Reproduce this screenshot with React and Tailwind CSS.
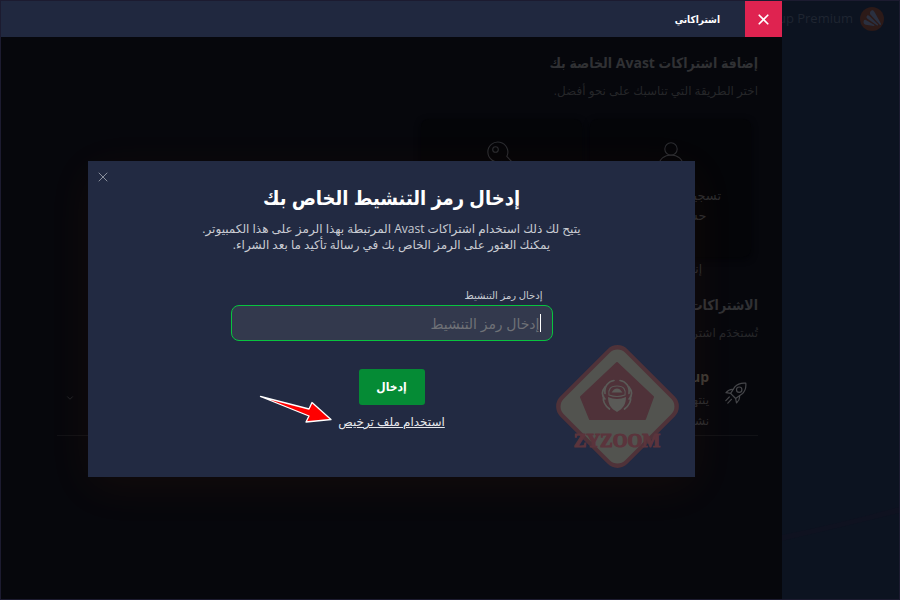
import React from "react";
import { X, ChevronDown } from "lucide-react";

function AvastLogo() {
  return (
    <svg viewBox="0 0 24 24" className="h-6 w-6 shrink-0" aria-hidden="true">
      <circle cx="12" cy="12" r="12" fill="#2c1a18" />
      <g fill="#2a3040">
        <path d="M11.5 3.5c1.3-.7 2.2 0 2.9 1.3l6.6 12c.4.9-.4 1.5-1.2.9L11 8.2c-1.700-1.200-1.400-3.500.5-4.700z" />
        <path d="M7.200 8.600c.6-.6 1.400-.5 2 .1l8.600 8.500c.6.7.2 1.500-.7 1.200L7.800 12.100c-1.500-.7-1.800-2.300-.6-3.500z" />
        <path d="M3.700 13.800c.3-.9 1.200-1.200 2.100-.8l8.300 4.800c.8.600.5 1.300-.4 1.200l-8-1.200c-1.700-.3-2.600-2-2-4z" />
      </g>
    </svg>
  );
}

function KeyIcon() {
  return (
    <svg viewBox="0 0 36 36" className="h-9 w-9" fill="none" stroke="#2b2d31" strokeWidth="1.1" aria-hidden="true">
      <path d="M17 20.500A10 10 0 1 1 22.800 15.500L34 27v6h-6v-4h-4v-4h-3z" />
      <circle cx="11.500" cy="8.500" r="2.800" />
    </svg>
  );
}

function PersonIcon() {
  return (
    <svg viewBox="0 0 36 36" className="h-9 w-9" fill="none" stroke="#2b2d31" strokeWidth="1.1" aria-hidden="true">
      <circle cx="18" cy="12" r="6.200" />
      <path d="M6 30v-2a12 10 0 0 1 24 0v2z" />
    </svg>
  );
}

function RocketIcon() {
  return (
    <svg viewBox="0 0 22 22" className="mt-[21px] h-[22px] w-[22px] shrink-0" fill="none" stroke="#45464a" strokeWidth="1.200" strokeLinejoin="round" strokeLinecap="round" aria-hidden="true">
      <path d="M20.800 1.200c-4.200-.4-8.200.6-11 3.700L5.600 11.300l5 5.200 6.300-4.400c3.200-2.700 4.300-6.700 3.900-10.900z" />
      <circle cx="14.200" cy="7.700" r="2.700" />
      <path d="M8.200 7.500C5.300 7 3.300 8 1 10.700l4.700.6M10.600 16.400l.9 4.600c2.600-2.300 3.500-4.400 3-7.300M4.300 15 .8 18.600M6.400 17.300l-3.600 3.800" />
    </svg>
  );
}

function Watermark() {
  return (
    <svg viewBox="0 0 125 125" className="pointer-events-none absolute right-[15px] bottom-2 h-[125px] w-[125px]">
      <rect x="15" y="15" width="95" height="95" rx="14" transform="rotate(45 62.500 62.500)" fill="#4f3239" />
      <rect x="19" y="19" width="87" height="87" rx="11" transform="rotate(45 62.500 62.500)" fill="#52534f" />
      <path d="M62 19 98 53 90 75H35L26 53z" fill="#4f3239" stroke="#4f3239" strokeWidth="2" strokeLinejoin="round" />
      <g fill="none" stroke="#5a5a57" strokeWidth="1.700" strokeLinecap="round">
        <path d="M59 36.500c-6 1-10 6-9 13M65 36.500c6 1 10 6 9 13" />
        <path d="M50 43c-4 5-3 9 0 12M74 43c4 5 3 9 0 12M48.500 52c-1 6 2 10 6 13M75.500 52c1 6-2 10-6 13" />
      </g>
      <path d="M53 53q9 4 18 0c0 7-3 11-6 13l-3 2-3-2c-3-2-6-6-6-13z" fill="#5a5a57" />
      <path d="M54 51c-1-5 1-9 8-9s9 4 8 9q-8 3-16 0z" fill="#4f3239" stroke="#5a5a57" strokeWidth="1.200" />
      <path d="M56.500 48.500 59 45.500q3-2 6 0l2.500 3z" fill="#5a5a57" />
      <text x="62" y="103" direction="ltr" textAnchor="middle" fontSize="19" fontWeight="700" fill="#5b343c" stroke="#5b343c" strokeWidth="1.200" fontFamily="'Liberation Serif', serif">
        ZYZOOM
      </text>
    </svg>
  );
}

function Arrow() {
  return (
    <svg viewBox="0 0 74 32" className="pointer-events-none absolute top-[232px] left-[171px] h-8 w-[74px]" aria-hidden="true">
      <path d="M1.500 3.500 50 16 53 9.500 72 26.500 47 29 50 23z" fill="#f00" stroke="#fff" strokeWidth="1.300" strokeLinejoin="round" />
    </svg>
  );
}

function ActivationDialog() {
  return (
    <div role="dialog" aria-labelledby="dialog-title" className="relative w-full max-w-[607px] bg-[#222a42] pt-[23px] pb-[46px] shadow-[0_10px_44px_0_rgba(255,100,20,0.06)]">
      <button type="button" aria-label="إغلاق" className="absolute top-2 left-[7px] text-[#a5a9b4]">
        <X strokeWidth={1.2} className="h-4 w-4" />
      </button>
      <h2 id="dialog-title" className="text-center font-['Open_Sans','DejaVu_Sans_Condensed',sans-serif] text-xl leading-7 font-bold text-white">إدخال رمز التنشيط الخاص بك</h2>
      <p className="mt-[9px] text-center text-xs leading-4 text-[#c9ccd3]">
        يتيح لك ذلك استخدام اشتراكات Avast المرتبطة بهذا الرمز على هذا الكمبيوتر.
        <br />
        يمكنك العثور على الرمز الخاص بك في رسالة تأكيد ما بعد الشراء.
      </p>
      <form className="mx-auto mt-[34px] flex w-[322px] flex-col items-center" onSubmit={(e) => e.preventDefault()}>
        <label htmlFor="code" className="w-full px-[10px] text-[10px] leading-4 text-[#c9ccd3]">إدخال رمز التنشيط</label>
        <div className="relative mt-[2px] w-full">
          <input id="code" type="text" placeholder="إدخال رمز التنشيط" className="h-9 w-full rounded-lg border border-[#08c43f] bg-[#33394d] px-3 text-sm text-white placeholder-[#6f7177] outline-none" />
          <span className="absolute top-[9px] right-3 h-[18px] w-px bg-white" />
        </div>
        <button type="submit" className="mt-7 h-9 w-[66px] rounded-[3px] bg-[#058b35] font-['Open_Sans','DejaVu_Sans_Condensed',sans-serif] text-xs font-bold text-white">إدخال</button>
        <a href="#license" className="mt-2 text-xs leading-[18px] text-[#e6e8ec] underline">استخدام ملف ترخيص</a>
      </form>
      <Watermark />
      <Arrow />
    </div>
  );
}

export default function App() {
  return (
    <div dir="rtl" className="flex min-h-screen border border-[#1c1b30] bg-[#0c1320] font-['Open_Sans','DejaVu_Sans',sans-serif]">
      <aside className="relative w-[117px] shrink-0 overflow-hidden">
        <div className="flex h-9 items-center gap-[7px] pr-[15px]">
          <AvastLogo />
          <span dir="ltr" className="text-[13px] whitespace-nowrap text-[#1f2531]">Cleanup Premium</span>
        </div>
        <svg viewBox="0 0 117 34" className="absolute bottom-[58px] left-0 w-full" aria-hidden="true">
          <path d="M0 28Q60 16 117 0V6Q60 20 0 34z" fill="#0f1220" />
        </svg>
      </aside>
      <div className="flex min-w-0 flex-1 flex-col bg-[#06070c]">
        <header className="flex h-9 items-center bg-[#20283f]">
          <button type="button" aria-label="إغلاق" className="flex h-9 w-[37px] items-center justify-center bg-[#df2350] text-white">
            <X size={17} strokeWidth={2.400} />
          </button>
          <h1 className="pr-[25px] font-['Open_Sans','DejaVu_Sans_Condensed',sans-serif] text-[10px] font-bold text-white">اشتراكاتي</h1>
        </header>
        <main className="relative flex-1 pt-3 pr-6 pl-14">
          <h2 className="font-['Open_Sans','DejaVu_Sans_Condensed',sans-serif] text-sm leading-7 font-bold text-[#303134]">إضافة اشتراكات Avast الخاصة بك</h2>
          <p className="mt-1 text-xs leading-5 text-[#252629]">اختر الطريقة التي تناسبك على نحو أفضل.</p>
          <div className="mt-[18px] flex gap-2 pr-[7px]">
            <div className="flex h-[138px] w-[161px] flex-col items-center rounded-lg bg-[#040508] pt-[18px] text-center text-[13px] leading-5 text-[#2b2c2f] shadow-[0_2px_6px_#030407]">
              <PersonIcon />
              <p className="mt-3">تسجيل الدخول إلى<br />حساب Avast</p>
            </div>
            <div className="flex h-[138px] w-[161px] flex-col items-center rounded-lg bg-[#040508] pt-[22px] shadow-[0_2px_6px_#030407]">
              <KeyIcon />
            </div>
          </div>
          <p className="mt-[2px] pr-14 text-xs leading-5 text-[#2b2c2f]">إنشاء حساب</p>
          <h2 className="mt-3 font-['Open_Sans','DejaVu_Sans_Condensed',sans-serif] text-sm leading-7 font-bold text-[#303134]">الاشتراكات على هذا الكمبيوتر</h2>
          <p className="mt-1 text-xs leading-5 text-[#252629]">تُستخدَم اشتراكاتك على هذا الكمبيوتر</p>
          <section className="mt-[18px] flex gap-4 border-b border-[#111216] pr-[11px]">
            <RocketIcon />
            <div className="flex-1 py-1 text-xs leading-[21px] text-[#2b2c2f]">
              <h3 className="text-sm leading-6 font-bold text-[#3c3833]">Avast Cleanup</h3>
              <p>ينتهي في</p>
              <p>نشط</p>
            </div>
            <ChevronDown size={10} className="ml-2 self-center text-[#292a2e]" />
          </section>
          <div className="absolute inset-0 flex items-center justify-center pt-0.5">
            <ActivationDialog />
          </div>
        </main>
      </div>
    </div>
  );
}
